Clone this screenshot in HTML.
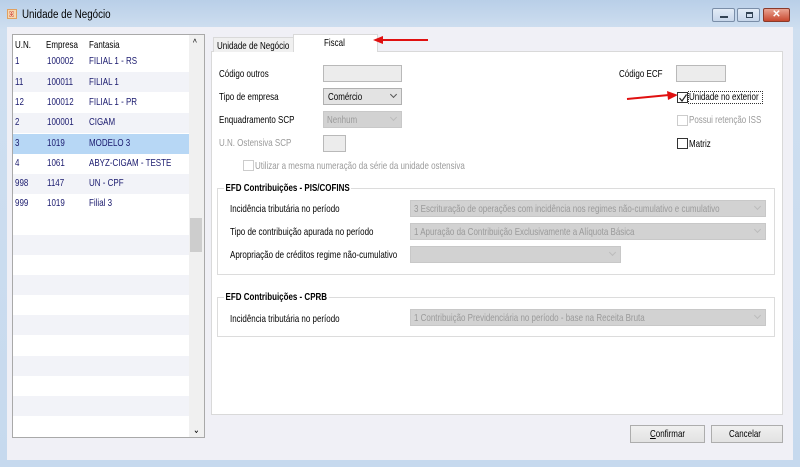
<!DOCTYPE html>
<html><head><meta charset="utf-8"><style>
*{box-sizing:border-box;margin:0;padding:0}
body{width:800px;height:467px;overflow:hidden;position:relative;background:linear-gradient(#b9cfe8,#cfdff0 30px,#c6d9ee);font-family:"Liberation Sans",sans-serif;font-size:10.5px;color:#000}
.a{position:absolute}
.t{position:absolute;white-space:nowrap;transform:scaleX(.76);transform-origin:0 0;line-height:11px;margin-top:0px}
.g{color:#9a9a9a}
.box{position:absolute;background:#ececec;border:1px solid #b9b9b9}
.sel{position:absolute;border:1px solid #b0b0b0;background:#e3e3e3}
.dis{position:absolute;background:#d2d2d2;border:1px solid #c8c8c8}
.chev{position:absolute;right:5px;top:3px;width:5px;height:5px;border-right:1px solid #555;border-bottom:1px solid #555;transform:rotate(45deg)}
.dis .chev{border-color:#bbb}
.cb{position:absolute;width:11px;height:11px;border:1px solid #333;background:#fff}
.grp{position:absolute;border:1px solid #dcdcdc}
.btn{position:absolute;border:1px solid #adadad;background:linear-gradient(#f0f0f0,#e2e2e2);text-align:center}
</style></head><body>
<div class="a" style="left:7px;top:9px;width:10px;height:10px;background:#f6d9b0;border:1px solid #e0a060"></div>
<div class="t" style="left:9px;top:9px;color:#c33;font-size:8px">ꕤ</div>
<div class="t" style="left:22px;top:10px;font-size:11.5px;transform:scaleX(.85)">Unidade de Negócio</div>
<div class="a" style="left:712px;top:8px;width:23px;height:14px;border:1px solid #7a8ea8;border-radius:2px;background:linear-gradient(#e3ecf7,#c7d6ea)"><div class="a" style="left:7px;top:7px;width:8px;height:2px;background:#345"></div></div>
<div class="a" style="left:737px;top:8px;width:23px;height:14px;border:1px solid #7a8ea8;border-radius:2px;background:linear-gradient(#e3ecf7,#c7d6ea)"><div class="a" style="left:8px;top:3px;width:7px;height:6px;border:1px solid #345;border-top-width:2px"></div></div>
<div class="a" style="left:763px;top:8px;width:27px;height:14px;border:1px solid #8a3a2a;border-radius:2px;background:linear-gradient(#e9a493,#c8482f);color:#fff;font-weight:bold;font-size:10px;text-align:center;line-height:12px">✕</div>

<div class="a" style="left:7px;top:27px;width:786px;height:433px;background:#f0f0f6"></div>

<!-- list -->
<div class="a" style="left:12px;top:34px;width:193px;height:404px;background:#fff;border:1px solid #a9a9a9"></div>
<div class="a" style="left:13px;top:72px;width:176px;height:20px;background:#f2f3f8"></div>
<div class="a" style="left:13px;top:113px;width:176px;height:20px;background:#f2f3f8"></div>
<div class="a" style="left:13px;top:134px;width:176px;height:20px;background:#b7d7f5"></div>
<div class="a" style="left:13px;top:174px;width:176px;height:20px;background:#f2f3f8"></div>
<div class="a" style="left:13px;top:235px;width:176px;height:20px;background:#f2f3f8"></div>
<div class="a" style="left:13px;top:275px;width:176px;height:20px;background:#f2f3f8"></div>
<div class="a" style="left:13px;top:315px;width:176px;height:20px;background:#f2f3f8"></div>
<div class="a" style="left:13px;top:356px;width:176px;height:20px;background:#f2f3f8"></div>
<div class="a" style="left:13px;top:396px;width:176px;height:20px;background:#f2f3f8"></div>
<div class="a" style="left:189px;top:35px;width:15px;height:402px;background:#f0f0f0"></div>
<div class="a" style="left:190px;top:218px;width:12px;height:34px;background:#cdcdcd"></div>
<div class="t" style="left:193px;top:38px">^</div>
<div class="t" style="left:193px;top:425px">⌄</div>
<div class="t" style="left:15px;top:40px">U.N.</div><div class="t" style="left:46px;top:40px">Empresa</div><div class="t" style="left:89px;top:40px">Fantasia</div>
<div style="color:#1a1a6e">
<div class="t" style="left:15px;top:56px">1</div><div class="t" style="left:47px;top:56px">100002</div><div class="t" style="left:89px;top:56px">FILIAL 1 - RS</div>
<div class="t" style="left:15px;top:77px">11</div><div class="t" style="left:47px;top:77px">100011</div><div class="t" style="left:89px;top:77px">FILIAL 1</div>
<div class="t" style="left:15px;top:97px">12</div><div class="t" style="left:47px;top:97px">100012</div><div class="t" style="left:89px;top:97px">FILIAL 1 - PR</div>
<div class="t" style="left:15px;top:117px">2</div><div class="t" style="left:47px;top:117px">100001</div><div class="t" style="left:89px;top:117px">CIGAM</div>
<div class="t" style="left:15px;top:138px">3</div><div class="t" style="left:47px;top:138px">1019</div><div class="t" style="left:89px;top:138px">MODELO 3</div>
<div class="t" style="left:15px;top:158px">4</div><div class="t" style="left:47px;top:158px">1061</div><div class="t" style="left:89px;top:158px">ABYZ-CIGAM - TESTE</div>
<div class="t" style="left:15px;top:178px">998</div><div class="t" style="left:47px;top:178px">1147</div><div class="t" style="left:89px;top:178px">UN - CPF</div>
<div class="t" style="left:15px;top:198px">999</div><div class="t" style="left:47px;top:198px">1019</div><div class="t" style="left:89px;top:198px">Filial 3</div>
</div>

<!-- tabs -->
<div class="a" style="left:211px;top:51px;width:572px;height:364px;background:#fff;border:1px solid #d9d9d9"></div>
<div class="a" style="left:213px;top:37px;width:81px;height:15px;background:#f0f0f0;border:1px solid #d9d9d9;border-bottom:none"></div>
<div class="t" style="left:217px;top:41px">Unidade de Negócio</div>
<div class="a" style="left:293px;top:34px;width:85px;height:18px;background:#fff;border:1px solid #d9d9d9;border-bottom:none"></div>
<div class="t" style="left:324px;top:38px">Fiscal</div>
<svg class="a" style="left:370px;top:33px" width="60" height="14"><line x1="58" y1="7" x2="10" y2="7" stroke="#e01010" stroke-width="2"/><polygon points="3,7 13,3 13,11" fill="#e01010"/></svg>

<div class="t" style="left:219px;top:69px">Código outros</div>
<div class="box" style="left:323px;top:65px;width:79px;height:17px"></div>
<div class="t" style="left:219px;top:92px">Tipo de empresa</div>
<div class="sel" style="left:323px;top:88px;width:79px;height:17px"><div class="t" style="left:4px;top:3px">Comércio</div><div class="chev"></div></div>
<div class="t" style="left:219px;top:115px">Enquadramento SCP</div>
<div class="dis" style="left:323px;top:111px;width:79px;height:17px"><div class="t g" style="left:3px;top:3px">Nenhum</div><div class="chev"></div></div>
<div class="t g" style="left:219px;top:138px">U.N. Ostensiva SCP</div>
<div class="box" style="left:323px;top:135px;width:23px;height:17px"></div>
<div class="cb" style="left:243px;top:160px;border-color:#ccc"></div>
<div class="t g" style="left:255px;top:161px">Utilizar a mesma numeração da série da unidade ostensiva</div>

<div class="t" style="left:619px;top:69px">Código ECF</div>
<div class="box" style="left:676px;top:65px;width:50px;height:17px"></div>
<svg class="a" style="left:625px;top:90px" width="54" height="12"><line x1="2" y1="9" x2="44" y2="5" stroke="#e01010" stroke-width="2"/><polygon points="53,5 42,1 43,10" fill="#e01010"/></svg>
<div class="cb" style="left:677px;top:92px"></div>
<svg class="a" style="left:678px;top:93px" width="10" height="10"><path d="M1.5 5 L4 8 L8.5 1.5" stroke="#222" stroke-width="1.2" fill="none"/></svg>
<div class="a" style="left:688px;top:91px;width:75px;height:13px;border:1px dotted #333"></div>
<div class="t" style="left:689px;top:92px">Unidade no exterior</div>
<div class="cb" style="left:677px;top:115px;border-color:#ccc"></div>
<div class="t g" style="left:689px;top:115px">Possui retenção ISS</div>
<div class="cb" style="left:677px;top:138px"></div>
<div class="t" style="left:689px;top:139px">Matriz</div>

<div class="grp" style="left:217px;top:188px;width:558px;height:87px"></div>
<div class="t" style="left:224px;top:183px;background:#fff;font-weight:bold;padding:0 2px">EFD Contribuições - PIS/COFINS</div>
<div class="t" style="left:230px;top:204px">Incidência tributária no período</div>
<div class="dis" style="left:410px;top:200px;width:356px;height:17px"><div class="t g" style="left:3px;top:3px">3 Escrituração de operações com incidência nos regimes não-cumulativo e cumulativo</div><div class="chev"></div></div>
<div class="t" style="left:230px;top:227px">Tipo de contribuição apurada no período</div>
<div class="dis" style="left:410px;top:223px;width:356px;height:17px"><div class="t g" style="left:3px;top:3px">1 Apuração da Contribuição Exclusivamente a Alíquota Básica</div><div class="chev"></div></div>
<div class="t" style="left:230px;top:250px">Apropriação de créditos regime não-cumulativo</div>
<div class="dis" style="left:410px;top:246px;width:211px;height:17px"><div class="chev"></div></div>

<div class="grp" style="left:217px;top:297px;width:558px;height:40px"></div>
<div class="t" style="left:224px;top:292px;background:#fff;font-weight:bold;padding:0 2px">EFD Contribuições - CPRB</div>
<div class="t" style="left:230px;top:314px">Incidência tributária no período</div>
<div class="dis" style="left:410px;top:309px;width:356px;height:17px"><div class="t g" style="left:3px;top:3px">1 Contribuição Previdenciária no período - base na Receita Bruta</div><div class="chev"></div></div>

<div class="btn" style="left:630px;top:425px;width:75px;height:18px"></div>
<div class="t" style="left:650px;top:429px"><u>C</u>onfirmar</div>
<div class="btn" style="left:711px;top:425px;width:72px;height:18px"></div>
<div class="t" style="left:729px;top:429px">Cancelar</div>
</body></html>
